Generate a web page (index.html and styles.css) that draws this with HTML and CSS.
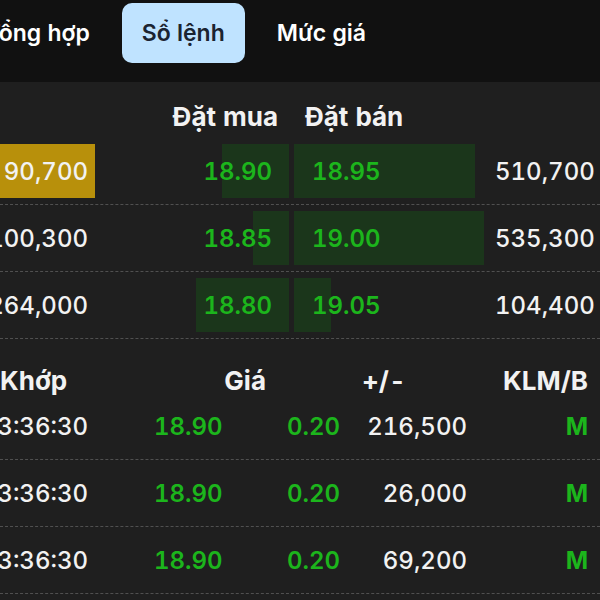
FILE: index.html
```html
<!DOCTYPE html>
<html lang="vi">
<head>
  <meta charset="UTF-8">
  <meta name="viewport" content="width=device-width, initial-scale=1.0">
  <link rel="stylesheet" href="styles.css">
</head>
<body>
  <div class="screen">
    <!-- Onglets -->
    <div class="tab-bar">
      <div class="tab-list">
        <div class="tab">Tổng hợp</div>
        <div class="tab active">Sổ lệnh</div>
        <div class="tab">Mức giá</div>
      </div>
    </div>

    <div class="panel">
      <!-- Sổ lệnh -->
      <div class="book-head">
        <div></div>
        <div class="head-buy">Đặt mua</div>
        <div class="head-sell">Đặt bán</div>
        <div></div>
      </div>

      <div class="book-row">
        <div class="vol vol-buy highlight">90,700</div>
        <div class="price buy"><span class="bar" style="width: 67px"></span><span class="num">18.90</span></div>
        <div class="price sell"><span class="bar" style="width: 181px"></span><span class="num">18.95</span></div>
        <div class="vol vol-sell">510,700</div>
      </div>
      <div class="book-row">
        <div class="vol vol-buy">100,300</div>
        <div class="price buy"><span class="bar" style="width: 36px"></span><span class="num">18.85</span></div>
        <div class="price sell"><span class="bar" style="width: 190px"></span><span class="num">19.00</span></div>
        <div class="vol vol-sell">535,300</div>
      </div>
      <div class="book-row">
        <div class="vol vol-buy">264,000</div>
        <div class="price buy"><span class="bar" style="width: 93px"></span><span class="num">18.80</span></div>
        <div class="price sell"><span class="bar" style="width: 37px"></span><span class="num">19.05</span></div>
        <div class="vol vol-sell">104,400</div>
      </div>

      <!-- Khớp lệnh -->
      <div class="trade-head">
        <div class="th-time">Khớp</div>
        <div class="th-price">Giá</div>
        <div class="th-change">+/-</div>
        <div class="th-side">KLM/B</div>
      </div>

      <div class="trade-row">
        <div class="t-time">13:36:30</div>
        <div class="t-price">18.90</div>
        <div class="t-change">0.20</div>
        <div class="t-vol">216,500</div>
        <div class="t-side">M</div>
      </div>
      <div class="trade-row">
        <div class="t-time">13:36:30</div>
        <div class="t-price">18.90</div>
        <div class="t-change">0.20</div>
        <div class="t-vol">26,000</div>
        <div class="t-side">M</div>
      </div>
      <div class="trade-row">
        <div class="t-time">13:36:30</div>
        <div class="t-price">18.90</div>
        <div class="t-change">0.20</div>
        <div class="t-vol">69,200</div>
        <div class="t-side">M</div>
      </div>
    </div>
  </div>
</body>
</html>
```
FILE: styles.css
```css
body, html {
  margin: 0;
  padding: 0;
}

body {
  background-color: #1f1f1f;
  font-family: Inter, "Noto Sans", sans-serif;
  color: #f2f2f2;
  font-variant-numeric: tabular-nums;
}

.screen {
  width: 600px;
  height: 600px;
  overflow: hidden;
}

/* onglets */
.tab-bar {
  background-color: #111111;
  height: 82px;
  box-sizing: border-box;
  padding-top: 3px;
}

.tab-list {
  display: flex;
  justify-content: flex-end;
  gap: 12px;
  width: 386px;
}

.tab {
  flex-shrink: 0;
  height: 60px;
  padding: 0 20px;
  display: flex;
  align-items: center;
  border-radius: 10px;
  font-size: 23px;
  font-weight: 600;
  color: #ffffff;
}

.tab.active {
  background-color: #bfe3ff;
  color: #1b2431;
}

.panel {
  background-color: #1f1f1f;
}

/* carnet d'ordres */
.book-head,
.book-row {
  display: grid;
  grid-template-columns: 95px 189px 196px 1fr;
  column-gap: 5px;
}

.book-head {
  padding-top: 20px;
  height: 36px;
  font-size: 26px;
  font-weight: 700;
  line-height: 30px;
}

.head-buy {
  text-align: right;
  padding-right: 11px;
}

.head-sell {
  padding-left: 11px;
}

.book-row {
  padding: 6px 0;
  border-bottom: 1px dashed #505050;
}

.book-row > div {
  height: 54px;
  display: flex;
  align-items: center;
  font-size: 24px;
  font-weight: 500;
}

.vol {
  justify-content: flex-end;
  white-space: nowrap;
}

.vol-buy {
  padding-right: 7px;
}

.vol-sell {
  padding-right: 7px;
}

.highlight {
  background-color: #b8900b;
}

.book-row > .price {
  position: relative;
  color: #1cb51c;
  font-weight: 600;
}

.price.buy {
  justify-content: flex-end;
  padding-right: 17px;
}

.price.sell {
  padding-left: 18px;
}

.bar {
  position: absolute;
  top: 0;
  bottom: 0;
  background-color: #1b361b;
}

.buy .bar {
  right: 0;
}

.sell .bar {
  left: 0;
}

.num {
  position: relative;
}

/* khớp lệnh */
.trade-head {
  display: grid;
  grid-template-columns: 150px 116px 1fr 1fr;
  padding-top: 30px;
  height: 24px;
  line-height: 24px;
  font-size: 26px;
  font-weight: 700;
}

.th-price {
  text-align: right;
}

.th-change {
  padding-left: 96px;
}

.th-side {
  text-align: right;
  padding-right: 12px;
}

.trade-row {
  display: grid;
  grid-template-columns: 120px 134px 106px 120px 1fr;
  height: 66px;
  align-items: center;
  border-bottom: 1px dashed #505050;
  font-size: 24px;
  font-weight: 500;
}

.t-time {
  display: flex;
  justify-content: flex-end;
  padding-right: 32px;
  white-space: nowrap;
}

.t-price {
  padding-left: 34px;
  color: #1cb51c;
  font-weight: 600;
}

.t-change {
  padding-left: 33px;
  color: #1cb51c;
  font-weight: 600;
}

.t-vol {
  text-align: right;
  padding-right: 13px;
}

.t-side {
  text-align: right;
  padding-right: 12px;
  color: #1cb51c;
  font-weight: 700;
}
```
